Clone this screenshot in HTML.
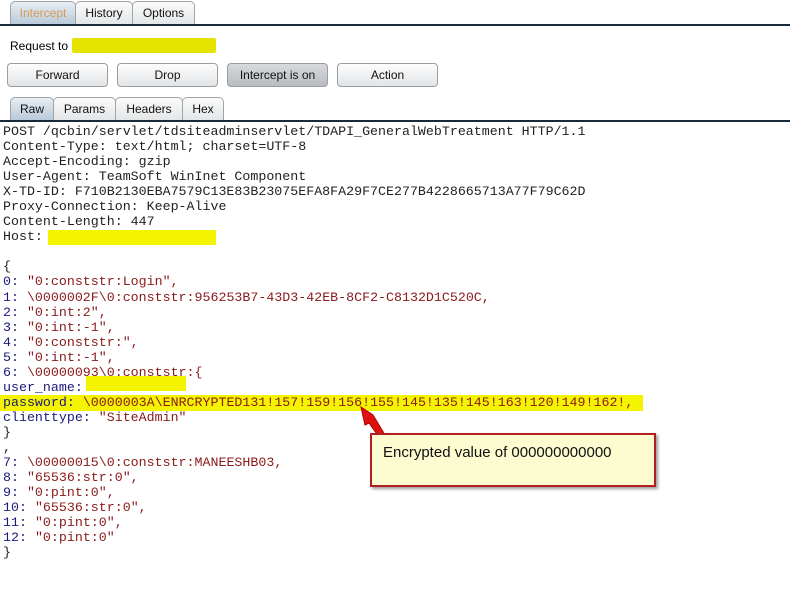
<!DOCTYPE html>
<html><head><style>
body{margin:0;width:790px;height:592px;background:#fff;position:relative;overflow:hidden;font-family:"Liberation Sans",sans-serif;}
.tab{position:absolute;top:1px;height:23px;border:1px solid #a0a4a8;border-bottom:none;border-radius:5px 5px 0 0;background:linear-gradient(#fbfbfb,#e4e6e8);font-size:12px;line-height:22px;text-align:center;color:#111;box-sizing:border-box;}
.sel{background:linear-gradient(#e8eef4,#b9cad9);}
.line{position:absolute;left:0;width:790px;height:2px;background:#1a2a3a;}
.btn{position:absolute;top:63px;height:24px;border:1px solid #9a9ea2;border-radius:4px;background:linear-gradient(#fdfdfd,#e2e4e6);font-size:12px;line-height:23px;text-align:center;box-sizing:border-box;color:#111;}
pre{position:absolute;left:3px;top:124px;margin:0;font-family:"Liberation Mono",monospace;font-size:13.3px;line-height:15.05px;color:#222;}
.k{color:#1a1a7a}.s{color:#8a1a1a}
</style></head><body>
<div class="tab sel" style="left:10px;width:66px;color:#d49a50;">Intercept</div>
<div class="tab" style="left:75px;width:58px;">History</div>
<div class="tab" style="left:132px;width:63px;">Options</div>
<div class="line" style="top:24px"></div>
<div style="position:absolute;left:10px;top:39px;font-size:12px;">Request to</div>
<div style="position:absolute;left:72px;top:38px;width:144px;height:15px;background:#e4e400;border-radius:2px;"></div>
<div class="btn" style="left:7px;width:101px;">Forward</div>
<div class="btn" style="left:117px;width:101px;">Drop</div>
<div class="btn" style="left:227px;width:101px;background:linear-gradient(#d8dadc,#b8bcc0);">Intercept is on</div>
<div class="btn" style="left:337px;width:101px;">Action</div>
<div class="tab sel" style="left:10px;top:97px;width:44px;">Raw</div>
<div class="tab" style="left:53px;top:97px;width:63px;">Params</div>
<div class="tab" style="left:115px;top:97px;width:68px;">Headers</div>
<div class="tab" style="left:182px;top:97px;width:42px;">Hex</div>
<div class="line" style="top:120px"></div>
<div style="position:absolute;left:48px;top:230px;width:168px;height:15px;background:#f4f400;"></div>
<div style="position:absolute;left:86px;top:376px;width:100px;height:15px;background:#f4f400;"></div>
<div style="position:absolute;left:0;top:395px;width:643px;height:16px;background:#f4f400;"></div>
<pre>POST /qcbin/servlet/tdsiteadminservlet/TDAPI_GeneralWebTreatment HTTP/1.1
Content-Type: text/html; charset=UTF-8
Accept-Encoding: gzip
User-Agent: TeamSoft WinInet Component
X-TD-ID: F710B2130EBA7579C13E83B23075EFA8FA29F7CE277B4228665713A77F79C62D
Proxy-Connection: Keep-Alive
Content-Length: 447
Host:

{
<span class="k">0:</span> <span class="s">"0:conststr:Login",</span>
<span class="k">1:</span> <span class="s">\0000002F\0:conststr:956253B7-43D3-42EB-8CF2-C8132D1C520C,</span>
<span class="k">2:</span> <span class="s">"0:int:2",</span>
<span class="k">3:</span> <span class="s">"0:int:-1",</span>
<span class="k">4:</span> <span class="s">"0:conststr:",</span>
<span class="k">5:</span> <span class="s">"0:int:-1",</span>
<span class="k">6:</span> <span class="s">\00000093\0:conststr:{</span>
<span class="k">user_name:</span>
<span class="k">password:</span> <span class="s">\0000003A\ENRCRYPTED131!157!159!156!155!145!135!145!163!120!149!162!,</span>
<span class="k">clienttype:</span> <span class="s">"SiteAdmin"</span>
}
,
<span class="k">7:</span> <span class="s">\00000015\0:conststr:MANEESHB03,</span>
<span class="k">8:</span> <span class="s">"65536:str:0",</span>
<span class="k">9:</span> <span class="s">"0:pint:0",</span>
<span class="k">10:</span> <span class="s">"65536:str:0",</span>
<span class="k">11:</span> <span class="s">"0:pint:0",</span>
<span class="k">12:</span> <span class="s">"0:pint:0"</span>
}</pre>
<svg style="position:absolute;left:355px;top:405px" width="40" height="40"><polygon points="6,2 18,10 30,30 24,32 14,18 10,20" fill="#e01010" stroke="#a00" stroke-width="1"/></svg>
<div style="position:absolute;left:370px;top:433px;width:286px;height:54px;background:#fdfbd0;border:2px solid #b02020;box-sizing:border-box;box-shadow:2px 2px 3px #999;font-size:15px;padding:9px 0 0 11px;color:#111;">Encrypted value of 000000000000</div>
</body></html>
